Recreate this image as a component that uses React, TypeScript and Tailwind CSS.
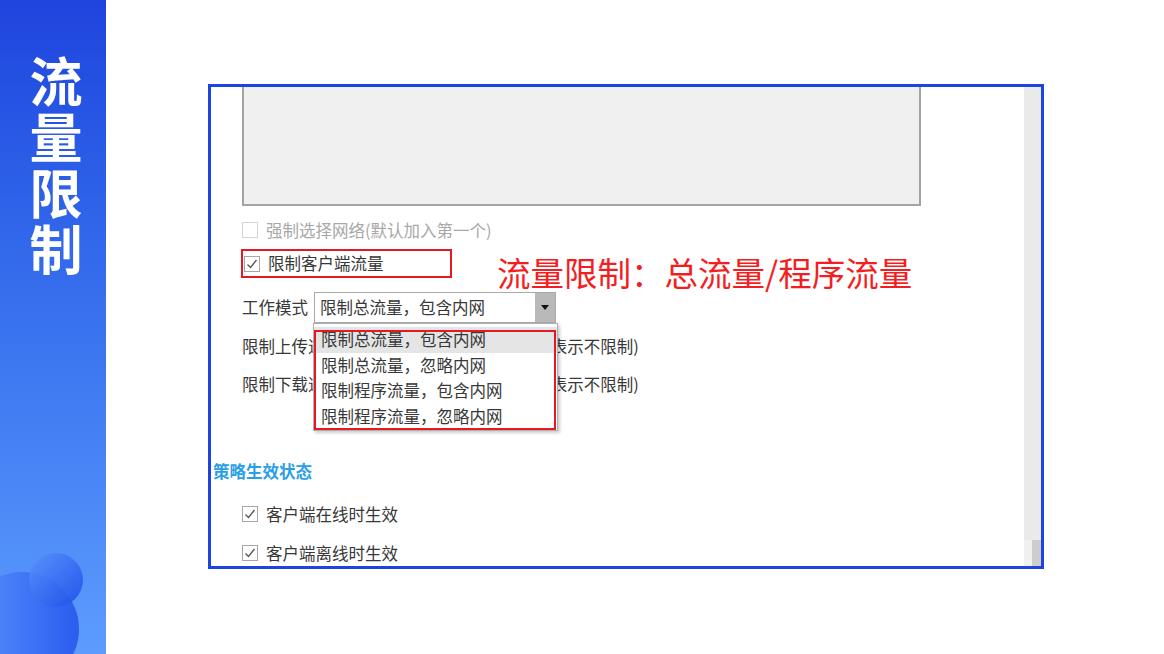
import React from "react";

const FONT = "font-['Noto_Sans_CJK_SC','Microsoft_YaHei',sans-serif]";

function CheckBox({ checked, disabled }: { checked?: boolean; disabled?: boolean }) {
  return (
    <span
      className={
        "flex h-[16px] w-[16px] shrink-0 items-center justify-center border bg-white " +
        (disabled ? "border-[#d4d4d4]" : "border-[#a6a6a6]")
      }
    >
      {checked && (
        <svg width="12" height="12" viewBox="0 0 12 12">
          <polyline points="1.5,6.5 4.5,9.5 10.5,2" fill="none" stroke="#555" strokeWidth="1.3" />
        </svg>
      )}
    </span>
  );
}

const options = ["限制总流量，包含内网", "限制总流量，忽略内网", "限制程序流量，包含内网", "限制程序流量，忽略内网"];

export default function App() {
  return (
    <div className={"flex h-[654px] w-[1164px] overflow-hidden bg-white " + FONT}>
      {/* left title bar */}
      <div className="relative flex w-[106px] shrink-0 flex-col items-center overflow-hidden bg-gradient-to-b from-[#1f44de] to-[#5d9cfe] pl-[6px] pt-[51px]">
        <span className="text-center text-[53px] font-bold leading-[56px] text-white">
          流<br />量<br />限<br />制
        </span>
        <div className="absolute left-[-35px] top-[572px] h-[114px] w-[114px] rounded-full bg-gradient-to-r from-[#5a90fc] to-[#2b5cef]" />
        <div className="absolute left-[29px] top-[553px] h-[54px] w-[54px] rounded-full bg-gradient-to-br from-[#5a92fb] via-[#3b70f2] to-[#1f4ce8] opacity-90" />
      </div>

      {/* screenshot frame */}
      <div className="ml-[102px] mt-[84px]">
        <div className="flex h-[485px] w-[836px] border-[3px] border-[#1b44e2] bg-white">
          <div className="relative flex-1 overflow-hidden">
            <div className="flex flex-col pl-[31px] text-[16.5px] text-[#383838]">
              <div className="h-[119px] w-[679px] border-x-2 border-b-2 border-[#a3a3a3] bg-[#f0f0f0]" />

              <div className="mt-[12px] flex h-[24px] items-center gap-[8px] text-[#a8a8a8]">
                <CheckBox disabled />
                <span>强制选择网络(默认加入第一个)</span>
              </div>

              <div className="-ml-[1px] mt-[7px] flex h-[29px] w-[211px] items-center gap-[8px] border-2 border-[#e21b22] pl-[1px]">
                <CheckBox checked />
                <span>限制客户端流量</span>
              </div>

              <div className="mt-[14px] flex h-[31px] items-center">
                <span className="w-[72px]">工作模式</span>
                <div className="flex h-[31px] w-[242px] border border-[#a9a9a9] bg-white">
                  <span className="flex flex-1 items-center pl-[5px]">限制总流量，包含内网</span>
                  <span className="flex w-[20px] items-center justify-center bg-[#b9b9b9]">
                    <svg width="8" height="5" viewBox="0 0 8 5">
                      <polygon points="0,0 8,0 4,5" fill="#111" />
                    </svg>
                  </span>
                </div>
              </div>

              <div className="mt-[11px] flex h-[24px] items-center">
                <span>限制上传速度</span>
                <span className="ml-[195px]">(0表示不限制)</span>
              </div>

              <div className="mt-[14px] flex h-[24px] items-center">
                <span>限制下载速度</span>
                <span className="ml-[195px]">(0表示不限制)</span>
              </div>

              <div className="-ml-[29px] mt-[64px] flex h-[22px] items-center font-bold text-[#2b9fe6]">
                策略生效状态
              </div>

              <div className="mt-[20px] flex h-[24px] items-center gap-[8px]">
                <CheckBox checked />
                <span>客户端在线时生效</span>
              </div>

              <div className="mt-[15px] flex h-[24px] items-center gap-[8px]">
                <CheckBox checked />
                <span>客户端离线时生效</span>
              </div>
            </div>

            {/* dropdown list */}
            <div className="absolute left-[102px] top-[236px] h-[108px] w-[245px] border border-[#b0b0b0] bg-white text-[16.5px] text-[#383838] shadow-[2px_2px_3px_rgba(0,0,0,0.2)]">
              <div className="flex flex-col pt-[3px]">
                {options.map((o, i) => (
                  <div
                    key={o}
                    className={"flex h-[25.5px] items-center pl-[7px] " + (i === 0 ? "bg-[#e5e5e5]" : "")}
                  >
                    {o}
                  </div>
                ))}
              </div>
              <div className="absolute bottom-0 left-0 right-[1px] top-[6px] border-2 border-[#e21b22]" />
            </div>

            {/* annotation */}
            <div className="absolute left-[286px] top-[165px] text-[33.5px] leading-[40px] text-[#f41e22]">
              流量限制：总流量/程序流量
            </div>
          </div>

          {/* scrollbar */}
          <div className="flex w-[17px] flex-col justify-end bg-[#eaeaea]">
            <div className="flex h-[26px]">
              <div className="w-[8px] bg-[#f0f0f0]" />
              <div className="flex-1 bg-[#cdcdcd]" />
            </div>
          </div>
        </div>
      </div>
    </div>
  );
}
